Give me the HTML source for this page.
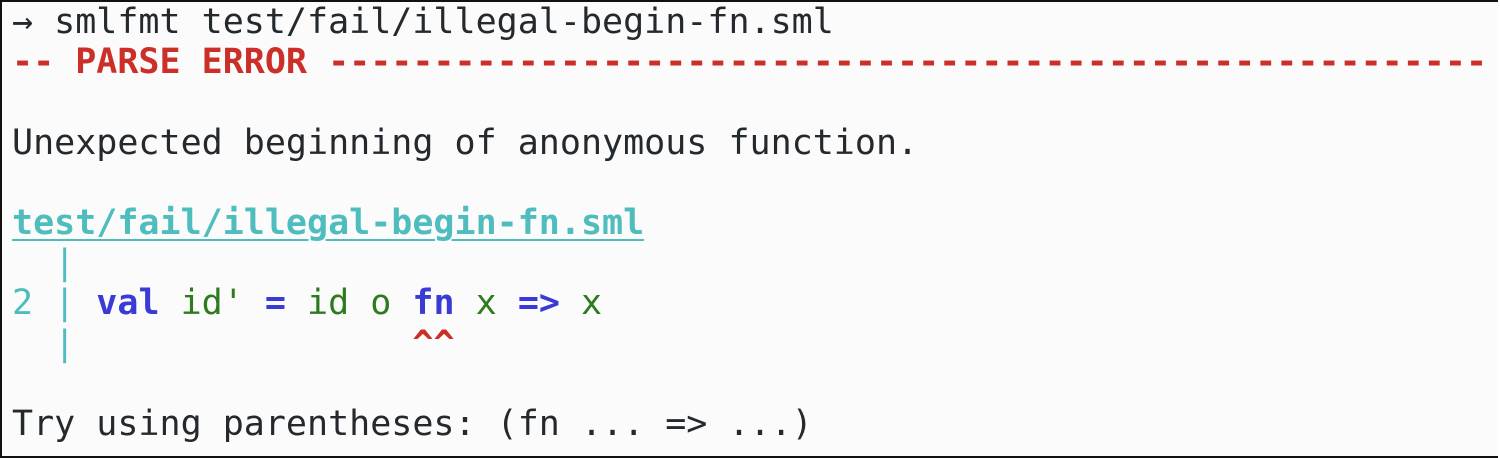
<!DOCTYPE html>
<html><head><meta charset="utf-8"><style>
html,body{margin:0;padding:0;}
body{width:1500px;height:458px;background:#fff;overflow:hidden;}
.box{position:absolute;left:0;top:0;width:1496px;height:454px;border:2px solid #111;border-right:none;background:#fbfbfb;}
pre{margin:0;position:absolute;left:12px;top:2px;font-family:"DejaVu Sans Mono","Liberation Mono",monospace;font-size:35px;line-height:40.2px;color:#24292e;white-space:pre;}
.r{color:#cc2f27;font-weight:bold}
.t{color:#4fbdbd}
.u{color:#4fbdbd;font-weight:bold;text-decoration:underline;text-decoration-thickness:2px;text-underline-offset:5px}
.b{color:#3a3ad4;font-weight:bold}
.g{color:#2e7a1e}
</style></head><body><div class="box"></div><pre>→ smlfmt test/fail/illegal-begin-fn.sml
<span class="r">-- PARSE ERROR -------------------------------------------------------</span>

Unexpected beginning of anonymous function.

<span class="u">test/fail/illegal-begin-fn.sml</span>
<span class="t">  |</span>
<span class="t">2 |</span> <span class="b">val</span> <span class="g">id'</span> <span class="b">=</span> <span class="g">id o</span> <span class="b">fn</span> <span class="g">x</span> <span class="b">=&gt;</span> <span class="g">x</span>
<span class="t">  |</span>                <span class="r">^^</span>

Try using parentheses: (fn ... =&gt; ...)</pre></body></html>
